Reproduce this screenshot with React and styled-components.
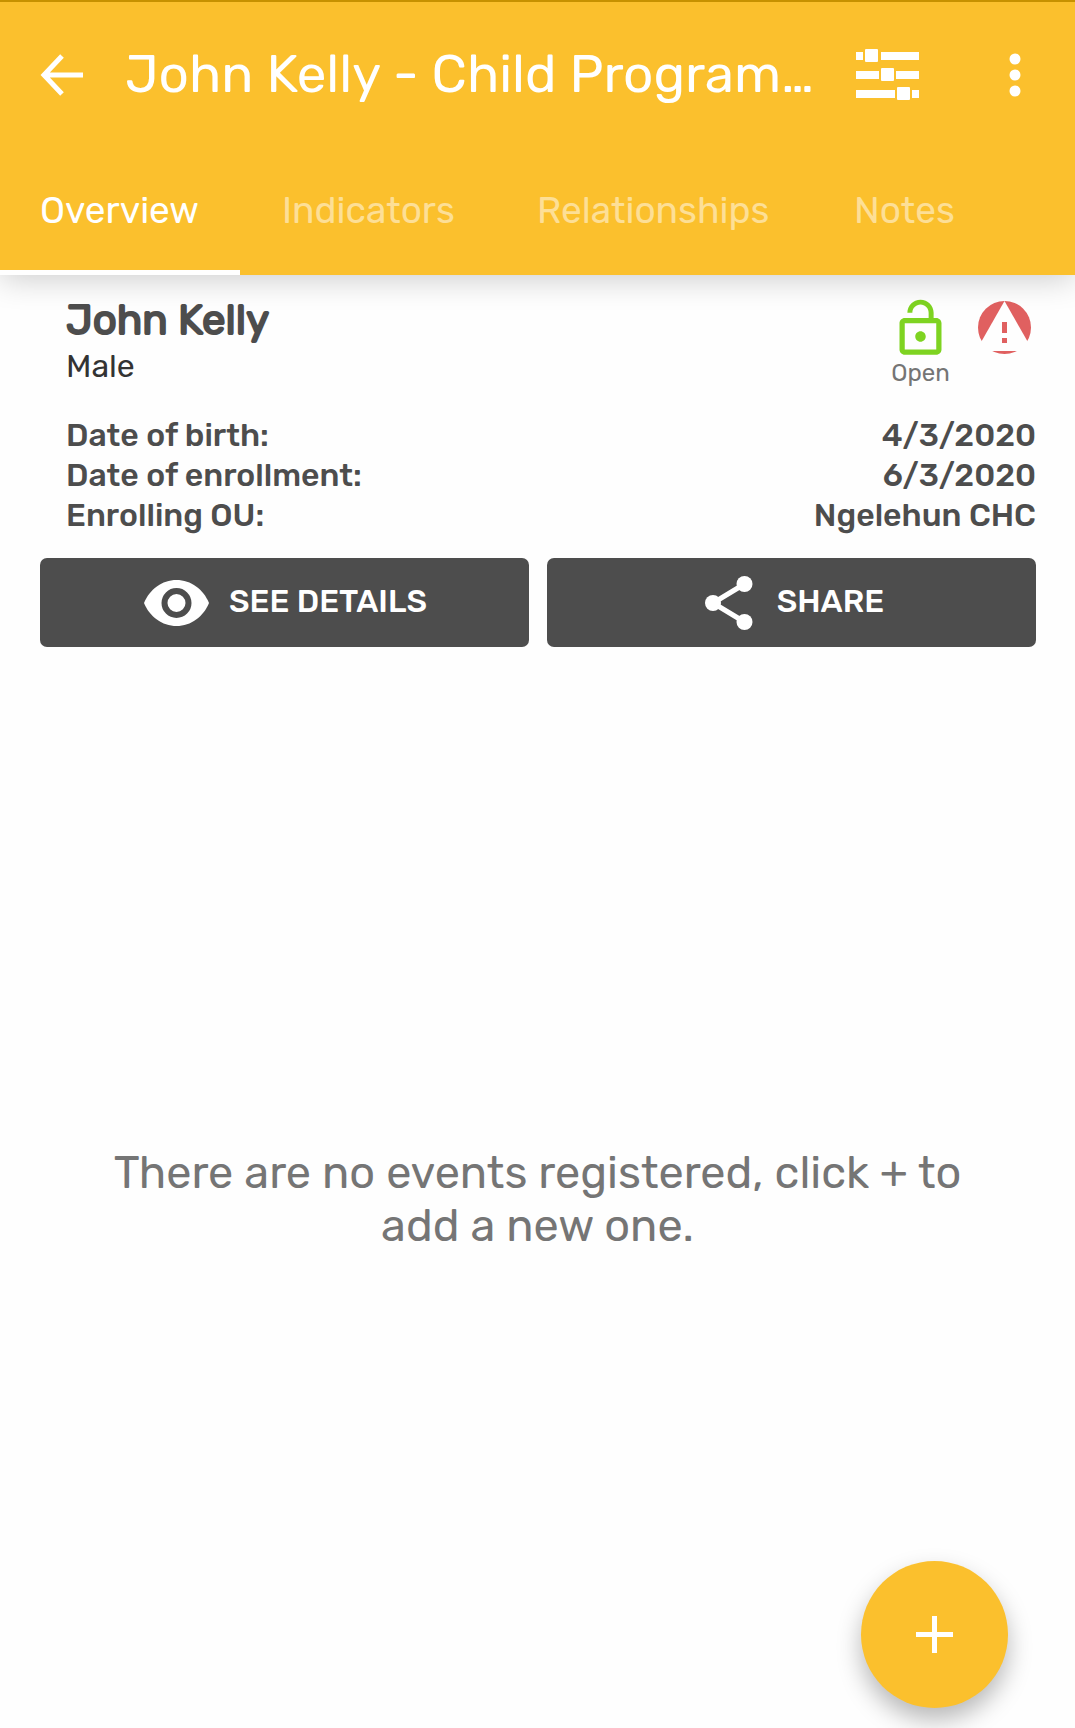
import React from "react";
import styled, { createGlobalStyle } from "styled-components";

const yellow = "#fbc02d";
const slate = "#4d4d4d";

const GlobalStyle = createGlobalStyle`
  *, *::before, *::after { box-sizing: border-box; }
  body { margin: 0; background: #fefefe; }
  button { font: inherit; border: 0; margin: 0; padding: 0; cursor: pointer; }
  h1, h2, p, dl, dd, dt { margin: 0; }
  svg { display: block; flex: none; }
`;

const Screen = styled.div`
  display: flex;
  flex-direction: column;
  min-height: 100vh;
  font-family: Rubik, Roboto, sans-serif;
`;

const Header = styled.header`
  position: relative;
  z-index: 1;
  background: ${yellow};
  border-top: 2px solid #c79100;
  box-shadow: 0 4px 30px rgba(0, 0, 0, 0.2);
`;

const Toolbar = styled.div`
  display: flex;
  align-items: center;
  height: 146px;
  padding: 0 52px 0 39px;
`;

const IconButton = styled.button`
  display: flex;
  background: none;
  color: #fff;
`;

const Title = styled.h1`
  flex: 1;
  min-width: 0;
  padding: 0 0 2px 40px;
  font-size: 53px;
  line-height: 64px;
  font-weight: 400;
  color: #fff;
  white-space: nowrap;
`;

const Actions = styled.div`
  display: flex;
  align-items: center;
  gap: 88px;
`;

const Tabs = styled.nav`
  display: grid;
  grid-template-columns: 240fr 253fr 315fr 261fr;
  gap: 2px;
`;

const Tab = styled.button`
  height: 127px;
  padding: 2px 0 0 40px;
  text-align: left;
  background: none;
  color: ${(p) => (p.$active ? "#fff" : "rgba(255, 255, 255, 0.5)")};
  border-bottom: 5px solid ${(p) => (p.$active ? "#fff" : "transparent")};
  font-size: 37px;
  line-height: 44px;
`;

const Card = styled.section`
  padding: 22px 39px 22px 40px;
  color: ${slate};
`;

const Summary = styled.div`
  display: flex;
  justify-content: space-between;
  padding: 0 5px 0 26px;
  height: 118px;
`;

const Name = styled.h2`
  font-size: 42px;
  line-height: 46px;
  font-weight: 400;
  -webkit-text-stroke: 2px ${slate};
`;

const Gender = styled.p`
  font-size: 32px;
  line-height: 46px;
  color: #333;
`;

const StatusGroup = styled.div`
  display: flex;
  gap: 26px;
  align-items: flex-start;
`;

const Status = styled.div`
  display: flex;
  flex-direction: column;
  align-items: center;
  padding-top: ${(p) => p.$top}px;
  font-size: 24px;
  line-height: 26px;
  color: #757575;
`;

const Facts = styled.dl`
  display: flex;
  flex-direction: column;
  padding-left: 26px;
`;

const Fact = styled.div`
  display: flex;
  justify-content: space-between;
  font-size: 32px;
  line-height: 40px;
  font-weight: 500;
`;

const Buttons = styled.div`
  display: grid;
  grid-template-columns: 1fr 1fr;
  gap: 18px;
  margin-top: 23px;
`;

const DarkButton = styled.button`
  display: flex;
  align-items: center;
  justify-content: center;
  gap: ${(p) => p.$gap}px;
  height: 89px;
  padding-left: ${(p) => p.$inset || 0}px;
  border-radius: 7px;
  background: ${slate};
  color: #fff;
  font-size: 32px;
  font-weight: 500;
  line-height: 40px;
`;

const ButtonLabel = styled.span`
  padding-bottom: 4px;
`;

const Empty = styled.main`
  flex: 1;
  display: flex;
  align-items: center;
  justify-content: center;
  padding: 0 80px;
`;

const EmptyText = styled.p`
  max-width: 900px;
  text-align: center;
  font-size: 45px;
  line-height: 53px;
  color: #757575;
`;

const Fab = styled.button`
  position: fixed;
  right: 67px;
  bottom: 20px;
  display: flex;
  align-items: center;
  justify-content: center;
  width: 147px;
  height: 147px;
  border-radius: 50%;
  background: ${yellow};
  box-shadow: 0 12px 24px rgba(0, 0, 0, 0.28);
`;

const BackIcon = () => (
  <svg width="46" height="44" viewBox="0 0 46 44" fill="none" stroke="#fff" strokeWidth="5">
    <path d="M44 22H5M23 3L5 22L23 41" />
  </svg>
);

const SlidersIcon = () => (
  <svg width="63" height="54" viewBox="0 0 63 54" fill="#fff">
    <path d="M0 4h7v8H0zM25 4h38v8H25zM0 23h23v8H0zM40 23h23v8H40zM0 42h39v8H0zM56 42h7v8h-7z" />
    <rect x="9" y="1" width="13" height="13" rx="1" />
    <rect x="25" y="20" width="13" height="13" rx="1" />
    <rect x="41" y="39" width="13" height="13" rx="1" />
  </svg>
);

const MoreIcon = () => (
  <svg width="16" height="48" viewBox="0 0 16 48" fill="#fff">
    <circle cx="8" cy="8" r="5.5" />
    <circle cx="8" cy="24" r="5.5" />
    <circle cx="8" cy="40" r="5.5" />
  </svg>
);

const LockIcon = () => (
  <svg width="63" height="63" viewBox="0 0 24 24" fill="#7ed321">
    <path d="M12 17c1.1 0 2-.9 2-2s-.9-2-2-2-2 .9-2 2 .9 2 2 2zm6-9h-1V6c0-2.76-2.24-5-5-5S7 3.24 7 6h1.9c0-1.71 1.39-3.1 3.1-3.1 1.71 0 3.1 1.39 3.1 3.1v2H6c-1.1 0-2 .9-2 2v10c0 1.1.9 2 2 2h12c1.1 0 2-.9 2-2V10c0-1.1-.9-2-2-2zm0 12H6V10h12v10z" />
  </svg>
);

const WarningIcon = () => (
  <svg width="53" height="53" viewBox="0 0 53 53">
    <circle cx="26.5" cy="26.5" r="26.5" fill="#e06060" />
    <path d="M26.5 0L55 50H-2z" fill="#fefefe" />
    <path d="M24 21h5v11h-5zM24 37h5v5h-5z" fill="#e06060" />
  </svg>
);

const EyeIcon = () => (
  <svg width="65" height="46" viewBox="0 0 65 46">
    <path d="M32.500 0C18 0 5.500 9.500 0 23C5.500 36.500 18 46 32.500 46S59.500 36.500 65 23C59.500 9.500 47 0 32.500 0z" fill="#fff" />
    <circle cx="32.500" cy="23" r="12" fill="#fff" stroke={slate} strokeWidth="6" />
  </svg>
);

const ShareIcon = () => (
  <svg width="48" height="54" viewBox="0 0 48 54" fill="#fff">
    <path d="M39.500 8L8 27L39.500 46" fill="none" stroke="#fff" strokeWidth="5" />
    <circle cx="39.500" cy="8" r="8" />
    <circle cx="8" cy="27" r="8" />
    <circle cx="39.500" cy="46" r="8" />
  </svg>
);

const PlusIcon = () => (
  <svg width="37" height="37" viewBox="0 0 37 37">
    <path d="M0 18.500H37M18.500 0V37" stroke="#fff" strokeWidth="5" />
  </svg>
);

const tabs = ["Overview", "Indicators", "Relationships", "Notes"];

const facts = [
  ["Date of birth:", "4/3/2020"],
  ["Date of enrollment:", "6/3/2020"],
  ["Enrolling OU:", "Ngelehun CHC"],
];

export default function App() {
  return (
    <Screen>
      <GlobalStyle />
      <Header>
        <Toolbar>
          <IconButton aria-label="Back"><BackIcon /></IconButton>
          <Title>John Kelly - Child Program…</Title>
          <Actions>
            <IconButton aria-label="Filters"><SlidersIcon /></IconButton>
            <IconButton aria-label="More options"><MoreIcon /></IconButton>
          </Actions>
        </Toolbar>
        <Tabs>
          {tabs.map((label, i) => (
            <Tab key={label} $active={i === 0}>{label}</Tab>
          ))}
        </Tabs>
      </Header>
      <Card>
        <Summary>
          <div>
            <Name>John Kelly</Name>
            <Gender>Male</Gender>
          </div>
          <StatusGroup>
            <Status $top={0}>
              <LockIcon />
              Open
            </Status>
            <Status $top={4}>
              <WarningIcon />
            </Status>
          </StatusGroup>
        </Summary>
        <Facts>
          {facts.map(([label, value]) => (
            <Fact key={label}>
              <dt>{label}</dt>
              <dd>{value}</dd>
            </Fact>
          ))}
        </Facts>
        <Buttons>
          <DarkButton $gap={20} $inset={2}><EyeIcon /><ButtonLabel>SEE DETAILS</ButtonLabel></DarkButton>
          <DarkButton $gap={24} $inset={6}><ShareIcon /><ButtonLabel>SHARE</ButtonLabel></DarkButton>
        </Buttons>
      </Card>
      <Empty>
        <EmptyText>There are no events registered, click + to add a new one.</EmptyText>
      </Empty>
      <Fab aria-label="Add event"><PlusIcon /></Fab>
    </Screen>
  );
}
